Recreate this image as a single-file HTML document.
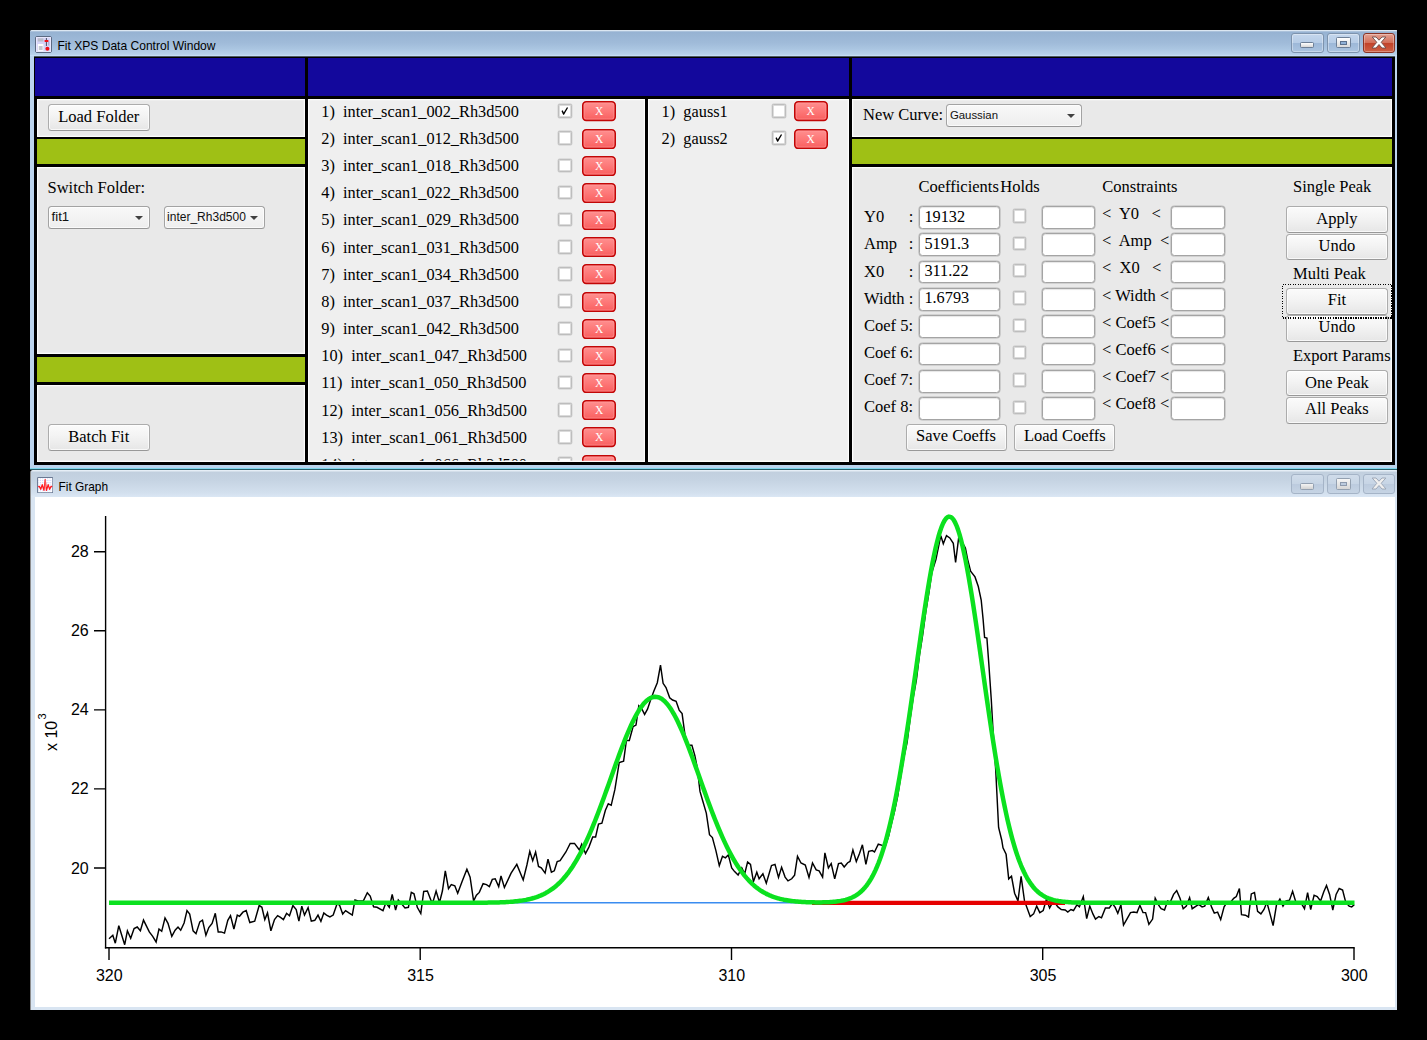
<!DOCTYPE html>
<html><head><meta charset="utf-8"><title>Fit XPS</title>
<style>
html,body{margin:0;padding:0;background:#000;}
body{width:1427px;height:1040px;position:relative;overflow:hidden;font-family:"Liberation Serif",serif;font-size:16.5px;color:#000;}
div,span{position:absolute;box-sizing:border-box;}
.win{left:30px;width:1367px;}
.tb{left:0;top:0;width:100%;}
.ttl{font-family:"Liberation Sans",sans-serif;font-size:12.05px;color:#000;white-space:nowrap;line-height:14px;}
.wb{top:3px;width:32.5px;height:19.6px;border-radius:3px;}
.blk{background:#000;}
.blue{background:#13089c;}
.grn{background:#9fc015;}
.g1{background:#e9e9e9;box-shadow:inset 0 0 0 1px #fdfdfd,inset 0 0 0 2px rgba(255,255,255,.22);}
.g2{background:#efefef;}
.g2::after{content:"";position:absolute;left:0;top:0;right:0;bottom:0;box-shadow:inset 0 0 0 1px #fdfdfd,inset 0 0 0 2px rgba(255,255,255,.22);pointer-events:none;}
.btn{height:26.5px;border:1px solid #acacac;border-bottom-color:#989898;border-radius:3.5px;background:linear-gradient(#fbfbfb,#f4f4f4 40%,#ececec 75%,#e6e6e6);text-align:center;line-height:22.4px;font-size:16.5px;white-space:nowrap;box-shadow:inset 0 0 0 1px rgba(255,255,255,.7);}
.dd{height:22.5px;border:1px solid #a3a3a3;border-bottom-color:#979797;border-radius:3.5px;background:linear-gradient(#f8f8f8,#f3f3f3 50%,#eeeeee);font-family:"Liberation Sans",sans-serif;font-size:12px;line-height:20.5px;padding-left:2.6px;white-space:nowrap;color:#111;box-shadow:inset 0 0 0 1px rgba(255,255,255,.7);}
.dd i{position:absolute;right:5.4px;top:8.7px;width:0;height:0;border-left:4.05px solid transparent;border-right:4.05px solid transparent;border-top:4.3px solid #404040;}
.row{left:0;width:100%;height:27px;}
.row .t{left:13.3px;top:3.8px;white-space:pre;line-height:18px;font-size:16.32px;}
.cb{width:13.6px;height:13.6px;border:1px solid #bdbdbd;border-radius:1.5px;background:#fff;top:5.2px;box-shadow:inset 0 0 0 0.7px #cfcfcf,0 0 0 0.4px rgba(170,170,170,.5);}
.cb svg{position:absolute;left:0;top:0;}
.xb{top:2.45px;width:34px;height:20.2px;color:#fff;font-size:11.5px;text-align:center;line-height:20.4px;text-indent:-0.4px;}
.xb svg{position:absolute;left:0;top:0;}
.xb b{position:absolute;left:0;top:0;width:100%;font-weight:normal;}
.lb{white-space:pre;line-height:22.5px;}
.inp{height:22.5px;border:1px solid #a4a4a4;border-radius:3.5px;background:#fff;line-height:21px;padding-left:3.2px;white-space:nowrap;box-shadow:0 0 0 0.6px rgba(140,140,140,.5),inset 0 1px 1px rgba(0,0,0,.10);}
.hd{white-space:nowrap;line-height:18px;}
.ax{font-family:"Liberation Sans",sans-serif;font-size:16px;fill:#000;}
</style></head><body>

<svg width="0" height="0" style="position:absolute"><defs><linearGradient id="xg" x1="0" y1="0" x2="0" y2="1"><stop offset="0" stop-color="#ff9090"/><stop offset="0.5" stop-color="#fd7878"/><stop offset="1" stop-color="#f95e5e"/></linearGradient></defs></svg>
<!-- ================= Window 1 ================= -->
<div class="win" style="top:30px;height:438px;background:#bcd4ee;border-radius:2px 1px 0 0;">
  <div class="tb" style="height:26px;border-radius:2px 1px 0 0;background:linear-gradient(#dbe6f1 0,#dbe6f1 0.8px,#96b2d2 1.8px,#a0bbd9 50%,#aac5e1 72%,#b8d1eb 94%,#c6def6 97%,#c6def6 100%);"></div>
  <!-- icon -->
  <svg style="position:absolute;left:5.3px;top:6px" width="17" height="17" viewBox="0 0 17 17">
    <rect x="0.5" y="0.5" width="16" height="16" rx="1.5" fill="#d6d4f8" stroke="#5b6a83"/>
    <rect x="1.5" y="1.5" width="14" height="14" fill="none" stroke="#e9e8fd" stroke-width="1"/>
    <rect x="2.8" y="2.3" width="5.6" height="3.2" fill="#b9bdc9"/>
    <rect x="2.8" y="8" width="5.6" height="6.8" fill="#fff"/>
    <rect x="3.8" y="10" width="3.8" height="4" fill="#c3c6cf"/>
    <rect x="10.9" y="2" width="1" height="8" fill="#4c5160"/>
    <rect x="13.4" y="5.5" width="0.8" height="4" fill="#9a9cc0"/>
    <rect x="9.6" y="4" width="3.8" height="2" rx="0.6" fill="#f01018"/>
    <circle cx="12.4" cy="12.7" r="2" fill="#f01018"/>
  </svg>
  <span class="ttl" style="left:27.5px;top:9.3px;">Fit XPS Data Control Window</span>
  <!-- buttons -->
  <div class="wb" style="left:1261px;border:1px solid #7d93ad;background:linear-gradient(#c3d6ec,#b6cce6 48%,#9db8d8 52%,#abc4e0);box-shadow:inset 0 0 0 1px rgba(255,255,255,.35);">
    <span style="left:7.6px;top:8.2px;width:14.6px;height:6.2px;background:linear-gradient(#fff,#d6d6d6);border:1px solid #6d7f96;border-radius:1.5px;"></span></div>
  <div class="wb" style="left:1297px;border:1px solid #7d93ad;background:linear-gradient(#c3d6ec,#b6cce6 48%,#9db8d8 52%,#abc4e0);box-shadow:inset 0 0 0 1px rgba(255,255,255,.35);">
    <span style="left:7.8px;top:2.8px;width:15px;height:11.6px;background:linear-gradient(#fff,#dadada);border:1px solid #6d7f96;border-radius:1.5px;"></span>
    <span style="left:11.8px;top:6.6px;width:7.2px;height:4.2px;background:#8fb0d6;border:1px solid #5d718c;"></span></div>
  <div class="wb" style="left:1332.5px;border:1px solid #8a3426;background:linear-gradient(#e2a193,#d4705a 48%,#c2432a 52%,#cf6045);box-shadow:inset 0 0 0 1px rgba(255,255,255,.3);">
    <svg style="position:absolute;left:7px;top:2.2px" width="16" height="13" viewBox="0 0 16 13"><path d="M1.2 1 L5 1 L8 4.2 L11 1 L14.8 1 L10.2 6.3 L15 12 L11 12 L8 8.5 L5 12 L1 12 L5.8 6.3 Z" fill="#fff" stroke="#6b4c48" stroke-width="0.9" stroke-linejoin="round"/></svg></div>

  <!-- panel (coords relative to window: subtract 30) -->
  <div style="left:4px;top:26px;width:1361px;height:1px;background:#4f5a66;"></div><div class="blk" style="left:4px;top:27px;width:1361px;height:407.5px;"></div>
  <div class="blue" style="left:5px;top:28px;width:270px;height:38px;"></div>
  <div class="blue" style="left:278px;top:28px;width:541px;height:38px;"></div>
  <div class="blue" style="left:822px;top:28px;width:540px;height:38px;"></div>

  <!-- left panel -->
  <div class="g1" style="left:7px;top:69px;width:268px;height:38px;"></div>
  <div class="grn" style="left:7px;top:109.2px;width:268px;height:24.8px;"></div>
  <div class="g1" style="left:7px;top:137px;width:268px;height:187.3px;"></div>
  <div class="grn" style="left:7px;top:327.2px;width:268px;height:24.6px;"></div>
  <div class="g1" style="left:7px;top:355px;width:268px;height:76.8px;"></div>
  <!-- list panels -->
  <div class="g2" style="left:278px;top:69px;width:337px;height:362.8px;overflow:hidden;">
    <div style="left:0;top:0;width:100%;height:100%;">
<div class="row" style="top:0.00px"><span class="t">1)&nbsp; inter_scan1_002_Rh3d500</span><span class="cb" style="left:250px"><svg width="11.4" height="11.4" viewBox="0 0 12 12"><path d="M2.6 6.2 L3.9 5.6 L5 8 L8.4 2.4 L9.6 3 L5.3 10.2 L4.4 10.2 Z" fill="#000"/></svg></span><span class="xb" style="left:274.4px"><svg width="34" height="20.2" viewBox="0 0 34 20.2"><rect x="0.8" y="0.8" width="32.4" height="18.6" rx="3.4" fill="url(#xg)" stroke="#c10606" stroke-width="1.6"/><rect x="2.1" y="2.1" width="29.8" height="16" rx="2.3" fill="none" stroke="#ffa2a2" stroke-opacity=".55" stroke-width="1"/></svg><b>X</b></span></div>
<div class="row" style="top:27.17px"><span class="t">2)&nbsp; inter_scan1_012_Rh3d500</span><span class="cb" style="left:250px"></span><span class="xb" style="left:274.4px"><svg width="34" height="20.2" viewBox="0 0 34 20.2"><rect x="0.8" y="0.8" width="32.4" height="18.6" rx="3.4" fill="url(#xg)" stroke="#c10606" stroke-width="1.6"/><rect x="2.1" y="2.1" width="29.8" height="16" rx="2.3" fill="none" stroke="#ffa2a2" stroke-opacity=".55" stroke-width="1"/></svg><b>X</b></span></div>
<div class="row" style="top:54.34px"><span class="t">3)&nbsp; inter_scan1_018_Rh3d500</span><span class="cb" style="left:250px"></span><span class="xb" style="left:274.4px"><svg width="34" height="20.2" viewBox="0 0 34 20.2"><rect x="0.8" y="0.8" width="32.4" height="18.6" rx="3.4" fill="url(#xg)" stroke="#c10606" stroke-width="1.6"/><rect x="2.1" y="2.1" width="29.8" height="16" rx="2.3" fill="none" stroke="#ffa2a2" stroke-opacity=".55" stroke-width="1"/></svg><b>X</b></span></div>
<div class="row" style="top:81.51px"><span class="t">4)&nbsp; inter_scan1_022_Rh3d500</span><span class="cb" style="left:250px"></span><span class="xb" style="left:274.4px"><svg width="34" height="20.2" viewBox="0 0 34 20.2"><rect x="0.8" y="0.8" width="32.4" height="18.6" rx="3.4" fill="url(#xg)" stroke="#c10606" stroke-width="1.6"/><rect x="2.1" y="2.1" width="29.8" height="16" rx="2.3" fill="none" stroke="#ffa2a2" stroke-opacity=".55" stroke-width="1"/></svg><b>X</b></span></div>
<div class="row" style="top:108.68px"><span class="t">5)&nbsp; inter_scan1_029_Rh3d500</span><span class="cb" style="left:250px"></span><span class="xb" style="left:274.4px"><svg width="34" height="20.2" viewBox="0 0 34 20.2"><rect x="0.8" y="0.8" width="32.4" height="18.6" rx="3.4" fill="url(#xg)" stroke="#c10606" stroke-width="1.6"/><rect x="2.1" y="2.1" width="29.8" height="16" rx="2.3" fill="none" stroke="#ffa2a2" stroke-opacity=".55" stroke-width="1"/></svg><b>X</b></span></div>
<div class="row" style="top:135.85px"><span class="t">6)&nbsp; inter_scan1_031_Rh3d500</span><span class="cb" style="left:250px"></span><span class="xb" style="left:274.4px"><svg width="34" height="20.2" viewBox="0 0 34 20.2"><rect x="0.8" y="0.8" width="32.4" height="18.6" rx="3.4" fill="url(#xg)" stroke="#c10606" stroke-width="1.6"/><rect x="2.1" y="2.1" width="29.8" height="16" rx="2.3" fill="none" stroke="#ffa2a2" stroke-opacity=".55" stroke-width="1"/></svg><b>X</b></span></div>
<div class="row" style="top:163.02px"><span class="t">7)&nbsp; inter_scan1_034_Rh3d500</span><span class="cb" style="left:250px"></span><span class="xb" style="left:274.4px"><svg width="34" height="20.2" viewBox="0 0 34 20.2"><rect x="0.8" y="0.8" width="32.4" height="18.6" rx="3.4" fill="url(#xg)" stroke="#c10606" stroke-width="1.6"/><rect x="2.1" y="2.1" width="29.8" height="16" rx="2.3" fill="none" stroke="#ffa2a2" stroke-opacity=".55" stroke-width="1"/></svg><b>X</b></span></div>
<div class="row" style="top:190.19px"><span class="t">8)&nbsp; inter_scan1_037_Rh3d500</span><span class="cb" style="left:250px"></span><span class="xb" style="left:274.4px"><svg width="34" height="20.2" viewBox="0 0 34 20.2"><rect x="0.8" y="0.8" width="32.4" height="18.6" rx="3.4" fill="url(#xg)" stroke="#c10606" stroke-width="1.6"/><rect x="2.1" y="2.1" width="29.8" height="16" rx="2.3" fill="none" stroke="#ffa2a2" stroke-opacity=".55" stroke-width="1"/></svg><b>X</b></span></div>
<div class="row" style="top:217.36px"><span class="t">9)&nbsp; inter_scan1_042_Rh3d500</span><span class="cb" style="left:250px"></span><span class="xb" style="left:274.4px"><svg width="34" height="20.2" viewBox="0 0 34 20.2"><rect x="0.8" y="0.8" width="32.4" height="18.6" rx="3.4" fill="url(#xg)" stroke="#c10606" stroke-width="1.6"/><rect x="2.1" y="2.1" width="29.8" height="16" rx="2.3" fill="none" stroke="#ffa2a2" stroke-opacity=".55" stroke-width="1"/></svg><b>X</b></span></div>
<div class="row" style="top:244.53px"><span class="t">10)&nbsp; inter_scan1_047_Rh3d500</span><span class="cb" style="left:250px"></span><span class="xb" style="left:274.4px"><svg width="34" height="20.2" viewBox="0 0 34 20.2"><rect x="0.8" y="0.8" width="32.4" height="18.6" rx="3.4" fill="url(#xg)" stroke="#c10606" stroke-width="1.6"/><rect x="2.1" y="2.1" width="29.8" height="16" rx="2.3" fill="none" stroke="#ffa2a2" stroke-opacity=".55" stroke-width="1"/></svg><b>X</b></span></div>
<div class="row" style="top:271.70px"><span class="t">11)&nbsp; inter_scan1_050_Rh3d500</span><span class="cb" style="left:250px"></span><span class="xb" style="left:274.4px"><svg width="34" height="20.2" viewBox="0 0 34 20.2"><rect x="0.8" y="0.8" width="32.4" height="18.6" rx="3.4" fill="url(#xg)" stroke="#c10606" stroke-width="1.6"/><rect x="2.1" y="2.1" width="29.8" height="16" rx="2.3" fill="none" stroke="#ffa2a2" stroke-opacity=".55" stroke-width="1"/></svg><b>X</b></span></div>
<div class="row" style="top:298.87px"><span class="t">12)&nbsp; inter_scan1_056_Rh3d500</span><span class="cb" style="left:250px"></span><span class="xb" style="left:274.4px"><svg width="34" height="20.2" viewBox="0 0 34 20.2"><rect x="0.8" y="0.8" width="32.4" height="18.6" rx="3.4" fill="url(#xg)" stroke="#c10606" stroke-width="1.6"/><rect x="2.1" y="2.1" width="29.8" height="16" rx="2.3" fill="none" stroke="#ffa2a2" stroke-opacity=".55" stroke-width="1"/></svg><b>X</b></span></div>
<div class="row" style="top:326.04px"><span class="t">13)&nbsp; inter_scan1_061_Rh3d500</span><span class="cb" style="left:250px"></span><span class="xb" style="left:274.4px"><svg width="34" height="20.2" viewBox="0 0 34 20.2"><rect x="0.8" y="0.8" width="32.4" height="18.6" rx="3.4" fill="url(#xg)" stroke="#c10606" stroke-width="1.6"/><rect x="2.1" y="2.1" width="29.8" height="16" rx="2.3" fill="none" stroke="#ffa2a2" stroke-opacity=".55" stroke-width="1"/></svg><b>X</b></span></div>
<div class="row" style="top:353.21px"><span class="t">14)&nbsp; inter_scan1_066_Rh3d500</span><span class="cb" style="left:250px"></span><span class="xb" style="left:274.4px"><svg width="34" height="20.2" viewBox="0 0 34 20.2"><rect x="0.8" y="0.8" width="32.4" height="18.6" rx="3.4" fill="url(#xg)" stroke="#c10606" stroke-width="1.6"/><rect x="2.1" y="2.1" width="29.8" height="16" rx="2.3" fill="none" stroke="#ffa2a2" stroke-opacity=".55" stroke-width="1"/></svg><b>X</b></span></div>
    </div>
  </div>
  <div class="g2" style="left:618px;top:69px;width:201px;height:362.8px;overflow:hidden;">
<div class="row" style="top:0.00px"><span class="t" style="left:13.6px">1)&nbsp; gauss1</span><span class="cb" style="left:124.3px"></span><span class="xb" style="left:145.9px"><svg width="34" height="20.2" viewBox="0 0 34 20.2"><rect x="0.8" y="0.8" width="32.4" height="18.6" rx="3.4" fill="url(#xg)" stroke="#c10606" stroke-width="1.6"/><rect x="2.1" y="2.1" width="29.8" height="16" rx="2.3" fill="none" stroke="#ffa2a2" stroke-opacity=".55" stroke-width="1"/></svg><b>X</b></span></div>
<div class="row" style="top:27.17px"><span class="t" style="left:13.6px">2)&nbsp; gauss2</span><span class="cb" style="left:124.3px"><svg width="11.4" height="11.4" viewBox="0 0 12 12"><path d="M2.6 6.2 L3.9 5.6 L5 8 L8.4 2.4 L9.6 3 L5.3 10.2 L4.4 10.2 Z" fill="#000"/></svg></span><span class="xb" style="left:145.9px"><svg width="34" height="20.2" viewBox="0 0 34 20.2"><rect x="0.8" y="0.8" width="32.4" height="18.6" rx="3.4" fill="url(#xg)" stroke="#c10606" stroke-width="1.6"/><rect x="2.1" y="2.1" width="29.8" height="16" rx="2.3" fill="none" stroke="#ffa2a2" stroke-opacity=".55" stroke-width="1"/></svg><b>X</b></span></div>
  </div>
  <!-- right panel -->
  <div class="g1" style="left:822px;top:69px;width:540px;height:38px;"></div>
  <div class="grn" style="left:822px;top:109.3px;width:540px;height:24.7px;"></div>
  <div class="g1" style="left:822px;top:137px;width:540px;height:294.8px;"></div>
</div>
<!-- cyan/teal line between windows -->
<div style="left:30px;top:468px;width:1367px;height:1.2px;background:#7fd6ec;"></div>
<div style="left:30px;top:469.2px;width:1367px;height:1.3px;background:#27606b;"></div>

<!-- controls in absolute page coords -->
<div class="btn" style="left:48px;top:104.2px;width:101.5px;line-height:24.4px;">Load Folder</div>
<span class="hd" style="left:47.5px;top:179px;">Switch Folder:</span>
<div class="dd" style="left:48px;top:206.1px;width:101.5px;font-size:13.2px;">fit1<i></i></div>
<div class="dd" style="left:163.5px;top:206.1px;width:101.2px;">inter_Rh3d500<i></i></div>
<div class="btn" style="left:48px;top:424.2px;width:101.5px;line-height:24.4px;">Batch Fit</div>

<span class="hd" style="left:863px;top:106.3px;">New Curve:</span>
<div class="dd" style="left:946.3px;top:104.2px;width:135.3px;font-size:11.4px;">Gaussian<i></i></div>

<span class="hd" style="left:918.5px;top:178.2px;">Coefficients</span>
<span class="hd" style="left:1000.3px;top:178.2px;">Holds</span>
<span class="hd" style="left:1102.3px;top:178.2px;">Constraints</span>
<span class="hd" style="left:1293px;top:178.2px;">Single Peak</span>
<span class="lb" style="left:864px;top:206.30px">Y0</span><span class="lb" style="left:908.8px;top:206.30px">:</span><span class="inp" style="left:919px;top:206.10px;width:81px"></span><span class="lb" style="left:924.4px;top:206.40px;font-size:16.3px">19132</span><span class="cb" style="left:1012.5px;top:209.20px"></span><span class="inp" style="left:1041.5px;top:206.10px;width:53.6px"></span><span class="lb" style="left:1102px;top:203.00px">&lt;&nbsp; Y0 &nbsp; &lt;</span><span class="inp" style="left:1170.5px;top:206.10px;width:54.2px"></span>
<span class="lb" style="left:864px;top:233.40px">Amp</span><span class="lb" style="left:908.8px;top:233.40px">:</span><span class="inp" style="left:919px;top:233.43px;width:81px"></span><span class="lb" style="left:924.4px;top:233.35px;font-size:16.3px">5191.3</span><span class="cb" style="left:1012.5px;top:236.53px"></span><span class="inp" style="left:1041.5px;top:233.43px;width:53.6px"></span><span class="lb" style="left:1102px;top:230.17px">&lt;&nbsp; Amp &nbsp;&lt;</span><span class="inp" style="left:1170.5px;top:233.43px;width:54.2px"></span>
<span class="lb" style="left:864px;top:260.50px">X0</span><span class="lb" style="left:908.8px;top:260.50px">:</span><span class="inp" style="left:919px;top:260.76px;width:81px"></span><span class="lb" style="left:924.4px;top:260.30px;font-size:16.3px">311.22</span><span class="cb" style="left:1012.5px;top:263.86px"></span><span class="inp" style="left:1041.5px;top:260.76px;width:53.6px"></span><span class="lb" style="left:1102px;top:257.34px">&lt;&nbsp; X0 &nbsp; &lt;</span><span class="inp" style="left:1170.5px;top:260.76px;width:54.2px"></span>
<span class="lb" style="left:864px;top:287.60px">Width :</span><span class="inp" style="left:919px;top:288.09px;width:81px"></span><span class="lb" style="left:924.4px;top:287.25px;font-size:16.3px">1.6793</span><span class="cb" style="left:1012.5px;top:291.19px"></span><span class="inp" style="left:1041.5px;top:288.09px;width:53.6px"></span><span class="lb" style="left:1102px;top:284.51px">&lt; Width &lt;</span><span class="inp" style="left:1170.5px;top:288.09px;width:54.2px"></span>
<span class="lb" style="left:864px;top:314.70px">Coef 5:</span><span class="inp" style="left:919px;top:315.42px;width:81px"></span><span class="lb" style="left:924.4px;top:314.20px;font-size:16.3px"></span><span class="cb" style="left:1012.5px;top:318.52px"></span><span class="inp" style="left:1041.5px;top:315.42px;width:53.6px"></span><span class="lb" style="left:1102px;top:311.68px">&lt; Coef5 &lt;</span><span class="inp" style="left:1170.5px;top:315.42px;width:54.2px"></span>
<span class="lb" style="left:864px;top:341.80px">Coef 6:</span><span class="inp" style="left:919px;top:342.75px;width:81px"></span><span class="lb" style="left:924.4px;top:341.15px;font-size:16.3px"></span><span class="cb" style="left:1012.5px;top:345.85px"></span><span class="inp" style="left:1041.5px;top:342.75px;width:53.6px"></span><span class="lb" style="left:1102px;top:338.85px">&lt; Coef6 &lt;</span><span class="inp" style="left:1170.5px;top:342.75px;width:54.2px"></span>
<span class="lb" style="left:864px;top:368.90px">Coef 7:</span><span class="inp" style="left:919px;top:370.08px;width:81px"></span><span class="lb" style="left:924.4px;top:368.10px;font-size:16.3px"></span><span class="cb" style="left:1012.5px;top:373.18px"></span><span class="inp" style="left:1041.5px;top:370.08px;width:53.6px"></span><span class="lb" style="left:1102px;top:366.02px">&lt; Coef7 &lt;</span><span class="inp" style="left:1170.5px;top:370.08px;width:54.2px"></span>
<span class="lb" style="left:864px;top:396.00px">Coef 8:</span><span class="inp" style="left:919px;top:397.41px;width:81px"></span><span class="lb" style="left:924.4px;top:395.05px;font-size:16.3px"></span><span class="cb" style="left:1012.5px;top:400.51px"></span><span class="inp" style="left:1041.5px;top:397.41px;width:53.6px"></span><span class="lb" style="left:1102px;top:393.19px">&lt; Coef8 &lt;</span><span class="inp" style="left:1170.5px;top:397.41px;width:54.2px"></span>
<div class="btn" style="left:905.5px;top:424.4px;width:101px;">Save Coeffs</div>
<div class="btn" style="left:1014.3px;top:424.4px;width:101px;">Load Coeffs</div>

<div class="btn" style="left:1286.2px;top:206.3px;width:101.4px;line-height:24.2px;">Apply</div>
<div class="btn" style="left:1286.2px;top:233.8px;width:101.4px;">Undo</div>
<span class="hd" style="left:1293px;top:265.2px;">Multi Peak</span>
<div class="btn" style="left:1286.2px;top:315.4px;width:101.4px;">Undo</div>
<svg style="position:absolute;left:1281px;top:283px" width="113" height="37"><rect x="1.6" y="1.3" width="108.9" height="33.6" fill="none" stroke="#000" stroke-width="1.25" stroke-dasharray="1.25 1.25" shape-rendering="crispEdges"/></svg>
<div class="btn" style="left:1286.2px;top:288.2px;width:101.4px;">Fit</div>
<span class="hd" style="left:1293px;top:346.8px;">Export Params</span>
<div class="btn" style="left:1286.2px;top:369.5px;width:101.4px;line-height:23.4px;">One Peak</div>
<div class="btn" style="left:1286.2px;top:397.1px;width:101.4px;">All Peaks</div>

<!-- ================= Window 2 ================= -->
<div class="win" style="top:470.4px;height:539.6px;background:#d9e5f2;border-radius:3px 1px 0 0;border-left:1px solid #8c8c8c;">
  <div class="tb" style="height:27px;border-radius:3px 1px 0 0;background:linear-gradient(#e6eef6 0,#e6eef6 1px,#c1cfde 2px,#c6d4e3 40%,#d3e0ee 85%,#dbe7f4 100%);"></div>
  <svg style="position:absolute;left:5.6px;top:6.2px" width="16.4" height="16.4" viewBox="0 0 17 17">
    <rect x="0.6" y="0.6" width="15.8" height="15.8" rx="0.8" fill="#fff" stroke="#6a7993" stroke-width="1.1"/>
    <g stroke="#c9cbfa" stroke-width="0.7" stroke-dasharray="1 1"><path d="M3.5 1.2V15.8M6 1.2V15.8M8.5 1.2V15.8M11 1.2V15.8M13.5 1.2V15.8M1.2 3.5H15.8M1.2 6H15.8M1.2 8.5H15.8M1.2 11H15.8M1.2 13.5H15.8"/></g>
    <path d="M1.2 10 L2.4 9.7 L3.9 12.8 L5.4 8 L7.2 13.9 L8.5 2.6 L9.8 13.9 L11.6 8 L13.1 12.8 L14.6 9.7 L15.8 10" fill="none" stroke="#ff1a20" stroke-width="1.3" stroke-linejoin="round"/>
    <path d="M8.5 3 V11" fill="none" stroke="#ff8a8e" stroke-width="0.8"/>
  </svg>
  <span class="ttl" style="left:27.5px;top:9.8px;font-size:11.9px;">Fit Graph</span>
  <div class="wb" style="left:1260px;top:3.6px;border:1px solid #a5b4c7;background:linear-gradient(#d0dcea,#c7d5e5 48%,#bccbde 52%,#c6d4e4);">
    <span style="left:7.6px;top:8.4px;width:14.6px;height:6.2px;background:linear-gradient(#f4f4f4,#d2d2d2);border:1px solid #93a0b0;border-radius:1.5px;"></span></div>
  <div class="wb" style="left:1296px;top:3.6px;border:1px solid #a5b4c7;background:linear-gradient(#d0dcea,#c7d5e5 48%,#bccbde 52%,#c6d4e4);">
    <span style="left:7.8px;top:2.8px;width:15px;height:11.8px;background:linear-gradient(#f6f6f6,#d6d6d6);border:1px solid #93a0b0;border-radius:1.5px;"></span>
    <span style="left:11.8px;top:6.6px;width:7.2px;height:4.4px;background:#bccbde;border:1px solid #8d9aad;"></span></div>
  <div class="wb" style="left:1331.5px;top:3.6px;border:1px solid #a5b4c7;background:linear-gradient(#d0dcea,#c7d5e5 48%,#bccbde 52%,#c6d4e4);">
    <svg style="position:absolute;left:7px;top:2.4px" width="16" height="13" viewBox="0 0 16 13"><path d="M1.2 1 L5 1 L8 4.2 L11 1 L14.8 1 L10.2 6.3 L15 12 L11 12 L8 8.5 L5 12 L1 12 L5.8 6.3 Z" fill="#efefef" stroke="#97a3b3" stroke-width="0.9" stroke-linejoin="round"/></svg></div>
  <div style="left:4px;top:26.5px;width:1360.3px;height:510px;background:#fff;"></div>
</div>

<svg style="position:absolute;left:0;top:0" width="1427" height="1040" viewBox="0 0 1427 1040">
  <g fill="none" stroke="#000" stroke-width="1.4" shape-rendering="auto">
    <path d="M105.6 516 V948.4"/>
    <path d="M104.9 947.8 H1354.7"/>
    <path d="M94 551.8H105.6M94 630.8H105.6M94 709.9H105.6M94 788.9H105.6M94 868H105.6"/>
    <path d="M109 947.8V960M420.2 947.8V960M731.5 947.8V960M1042.7 947.8V960M1354 947.8V960"/>
  </g>
  <g class="ax" text-anchor="end">
    <text x="88.7" y="557.3">28</text><text x="88.7" y="636.3">26</text><text x="88.7" y="715.4">24</text><text x="88.7" y="794.4">22</text><text x="88.7" y="873.5">20</text>
  </g>
  <g class="ax" text-anchor="middle">
    <text x="109.3" y="981">320</text><text x="420.5" y="981">315</text><text x="731.8" y="981">310</text><text x="1043" y="981">305</text><text x="1354.3" y="981">300</text>
  </g>
  <g class="ax" transform="translate(57.3,751) rotate(-90)"><text x="0" y="0">x 10</text><text x="31.5" y="-11.5" style="font-size:11px">3</text></g>
  <path d="M109.0 938.7 L112.8 935.3 L115.3 943.2 L118.8 925.7 L124.7 944.7 L127.4 930.8 L130.7 938.2 L134.1 928.6 L137.2 927.0 L140.4 930.8 L143.5 920.1 L149.3 931.9 L152.7 936.4 L156.1 942.0 L159.0 929.0 L161.7 931.3 L165.0 918.0 L168.0 923.4 L171.8 936.4 L175.1 930.2 L178.0 927.0 L180.7 930.2 L184.1 923.0 L187.0 910.6 L189.7 914.0 L193.1 930.8 L196.0 933.7 L199.8 921.9 L202.5 920.1 L205.9 935.3 L208.8 927.5 L212.1 923.4 L215.3 913.3 L218.2 931.9 L221.1 931.9 L224.5 933.1 L227.8 920.3 L230.5 915.6 L233.9 929.0 L237.3 915.1 L239.5 916.3 L242.9 912.2 L246.2 910.6 L249.8 922.5 L254.7 921.2 L259.2 905.5 L261.9 907.3 L264.8 919.6 L267.5 912.9 L270.9 930.8 L274.5 919.6 L277.6 915.6 L280.5 917.4 L283.4 919.6 L286.6 913.3 L289.5 915.8 L292.9 905.5 L296.2 909.5 L298.9 921.2 L301.8 906.2 L304.5 915.1 L308.1 907.7 L311.3 921.2 L314.8 920.3 L318.0 915.1 L320.9 921.4 L323.8 912.9 L326.5 915.1 L329.9 916.9 L333.2 915.1 L337.0 903.9 L339.5 905.0 L342.7 914.0 L345.6 910.6 L348.9 912.9 L352.3 915.1 L355.0 899.9 L357.9 901.0 L363.5 900.6 L367.3 892.7 L370.2 896.1 L373.6 906.8 L377.0 907.3 L383.0 910.6 L385.9 902.8 L389.3 907.3 L392.2 894.5 L395.6 910.0 L398.3 900.1 L401.6 903.9 L405.0 908.0 L408.4 907.3 L411.3 892.3 L414.0 893.8 L417.3 907.3 L420.8 913.5 L423.7 891.5 L427.4 891.0 L431.2 901.1 L433.2 901.1 L436.1 891.0 L439.5 902.5 L442.4 891.0 L445.3 870.8 L448.5 888.7 L451.3 884.6 L454.8 885.8 L457.7 893.3 L462.0 881.7 L466.9 869.3 L470.1 877.1 L473.6 901.1 L476.4 895.3 L479.3 892.4 L483.1 883.7 L486.5 884.6 L489.4 886.6 L492.3 879.4 L495.2 878.8 L498.7 886.6 L501.0 876.0 L504.4 887.5 L511.1 873.1 L516.8 864.4 L523.2 880.0 L526.9 865.0 L529.8 851.4 L532.7 860.7 L535.6 852.0 L538.5 866.4 L541.3 867.9 L545.1 873.1 L548.0 859.2 L551.4 872.2 L554.3 870.8 L557.2 861.5 L560.1 860.7 L565.9 852.0 L570.2 843.4 L574.5 843.4 L579.4 850.0 L581.7 844.2 L585.5 853.5 L588.9 847.1 L592.7 837.0 L595.6 837.0 L598.5 824.0 L601.9 823.2 L605.4 810.2 L608.3 803.8 L611.2 805.3 L614.9 789.4 L619.2 762.6 L623.6 761.2 L626.4 740.4 L629.3 740.4 L633.1 726.5 L636.0 725.1 L638.8 705.8 L641.7 708.7 L644.6 714.4 L647.5 709.2 L650.4 700.6 L653.8 691.3 L657.3 682.7 L660.5 665.1 L663.1 683.3 L666.0 687.6 L669.7 697.7 L672.6 700.0 L676.1 701.2 L679.2 710.1 L682.1 713.6 L685.0 735.2 L688.5 745.3 L691.9 745.3 L694.8 755.4 L697.1 766.9 L700.0 791.4 L702.9 801.5 L706.3 813.1 L709.5 834.7 L712.4 837.6 L715.9 850.6 L719.3 865.6 L722.5 856.3 L725.4 857.8 L728.3 854.9 L731.7 867.9 L734.6 871.6 L738.1 875.1 L741.8 867.9 L744.7 873.7 L747.6 862.1 L750.5 864.4 L753.4 881.7 L756.8 872.2 L759.1 878.8 L762.9 873.7 L766.3 883.2 L771.5 865.6 L775.0 864.4 L778.5 877.4 L781.6 867.3 L785.1 877.1 L788.0 880.9 L791.7 878.8 L794.6 875.1 L797.5 856.3 L801.0 863.0 L805.3 865.0 L809.0 877.4 L812.5 863.0 L816.2 869.9 L819.1 870.8 L822.6 877.1 L824.9 852.9 L828.4 867.9 L831.2 863.6 L834.7 878.8 L838.5 863.6 L841.3 863.0 L844.2 867.0 L847.7 862.7 L850.0 861.5 L852.9 850.0 L856.3 861.5 L859.5 853.5 L862.4 844.8 L865.9 864.4 L868.7 851.4 L872.5 850.6 L874.5 852.0 L878.3 844.2 L882.3 845.4 L885.4 845.7 L888.5 836.6 L891.6 823.2 L894.7 810.7 L897.8 795.5 L900.9 775.3 L904.0 756.8 L907.1 742.3 L910.2 718.4 L913.3 697.0 L916.4 679.9 L919.5 654.9 L922.6 635.5 L925.7 612.4 L928.8 593.5 L931.9 572.2 L935.9 559.6 L940.8 535.6 L943.3 543.8 L946.5 535.6 L949.8 537.9 L953.3 543.3 L955.6 562.5 L958.7 537.5 L962.0 542.0 L965.4 548.0 L967.7 559.6 L970.6 571.2 L975.0 576.9 L978.3 586.5 L981.2 600.0 L983.1 619.2 L984.6 637.5 L986.9 638.0 L988.8 663.5 L991.3 700.0 L992.8 726.5 L995.7 769.8 L998.6 827.5 L1001.7 840.0 L1003.0 847.8 L1006.1 854.3 L1008.7 878.9 L1011.5 876.3 L1014.6 893.2 L1018.0 900.9 L1021.1 876.3 L1024.5 900.9 L1030.2 916.5 L1033.6 913.9 L1036.7 906.1 L1039.8 912.6 L1043.2 910.5 L1046.5 899.1 L1049.6 907.9 L1053.5 900.9 L1057.9 906.9 L1061.3 909.5 L1065.2 910.0 L1067.8 912.1 L1070.9 909.5 L1073.5 910.5 L1076.9 904.8 L1079.4 906.9 L1083.3 896.5 L1086.7 918.6 L1089.8 906.1 L1092.9 913.9 L1095.5 919.1 L1098.9 916.5 L1101.5 917.8 L1105.4 907.9 L1109.3 907.9 L1112.4 903.5 L1115.2 907.4 L1117.8 913.4 L1120.9 904.8 L1123.5 925.0 L1126.9 919.1 L1130.5 912.6 L1133.9 912.1 L1137.0 912.6 L1139.9 905.3 L1143.0 912.6 L1145.6 912.6 L1148.9 924.3 L1152.6 919.1 L1155.2 898.3 L1158.5 904.8 L1161.1 908.7 L1164.5 910.0 L1167.6 900.9 L1170.2 902.2 L1173.6 894.4 L1176.7 890.6 L1180.0 898.3 L1183.2 908.7 L1186.3 906.1 L1189.6 897.6 L1192.2 908.7 L1196.1 906.1 L1198.7 904.3 L1202.1 906.9 L1204.7 906.1 L1208.3 897.6 L1211.7 907.4 L1214.3 913.1 L1217.6 912.1 L1220.7 919.6 L1224.1 906.9 L1227.2 902.2 L1230.6 902.2 L1233.7 898.3 L1236.3 896.5 L1239.4 888.5 L1241.5 914.7 L1245.4 915.2 L1248.5 917.0 L1251.3 893.9 L1254.5 892.6 L1257.6 911.3 L1260.9 913.9 L1264.0 909.5 L1266.9 902.2 L1270.0 913.9 L1273.1 925.6 L1276.5 904.8 L1279.9 899.1 L1283.0 906.1 L1286.1 900.9 L1289.5 900.2 L1292.6 891.3 L1295.9 902.2 L1299.0 902.2 L1301.9 904.3 L1304.5 908.7 L1307.6 892.6 L1310.7 909.5 L1314.1 895.2 L1317.2 896.5 L1320.6 900.9 L1323.7 891.9 L1326.5 885.4 L1329.6 894.4 L1332.8 910.0 L1336.1 894.4 L1339.2 888.5 L1342.6 890.0 L1345.7 902.2 L1349.1 906.1 L1351.7 906.9 L1354.3 904.8" fill="none" stroke="#000" stroke-width="1.45" stroke-linejoin="miter"/>
  <path d="M109 902.8H1354" stroke="#3a8cf0" stroke-width="1.6" fill="none"/>
  <path d="M812 902.8H1065" stroke="#e60000" stroke-width="4.2" fill="none"/>
  <path d="M109.0 902.80 L110.5 902.80 L112.0 902.80 L113.5 902.80 L115.0 902.80 L116.5 902.80 L118.0 902.80 L119.5 902.80 L121.0 902.80 L122.5 902.80 L124.0 902.80 L125.5 902.80 L127.0 902.80 L128.5 902.80 L130.0 902.80 L131.5 902.80 L133.0 902.80 L134.5 902.80 L136.0 902.80 L137.5 902.80 L139.0 902.80 L140.5 902.80 L142.0 902.80 L143.5 902.80 L145.0 902.80 L146.5 902.80 L148.0 902.80 L149.5 902.80 L151.0 902.80 L152.5 902.80 L154.0 902.80 L155.5 902.80 L157.0 902.80 L158.5 902.80 L160.0 902.80 L161.5 902.80 L163.0 902.80 L164.5 902.80 L166.0 902.80 L167.5 902.80 L169.0 902.80 L170.5 902.80 L172.0 902.80 L173.5 902.80 L175.0 902.80 L176.5 902.80 L178.0 902.80 L179.5 902.80 L181.0 902.80 L182.5 902.80 L184.0 902.80 L185.5 902.80 L187.0 902.80 L188.5 902.80 L190.0 902.80 L191.5 902.80 L193.0 902.80 L194.5 902.80 L196.0 902.80 L197.5 902.80 L199.0 902.80 L200.5 902.80 L202.0 902.80 L203.5 902.80 L205.0 902.80 L206.5 902.80 L208.0 902.80 L209.5 902.80 L211.0 902.80 L212.5 902.80 L214.0 902.80 L215.5 902.80 L217.0 902.80 L218.5 902.80 L220.0 902.80 L221.5 902.80 L223.0 902.80 L224.5 902.80 L226.0 902.80 L227.5 902.80 L229.0 902.80 L230.5 902.80 L232.0 902.80 L233.5 902.80 L235.0 902.80 L236.5 902.80 L238.0 902.80 L239.5 902.80 L241.0 902.80 L242.5 902.80 L244.0 902.80 L245.5 902.80 L247.0 902.80 L248.5 902.80 L250.0 902.80 L251.5 902.80 L253.0 902.80 L254.5 902.80 L256.0 902.80 L257.5 902.80 L259.0 902.80 L260.5 902.80 L262.0 902.80 L263.5 902.80 L265.0 902.80 L266.5 902.80 L268.0 902.80 L269.5 902.80 L271.0 902.80 L272.5 902.80 L274.0 902.80 L275.5 902.80 L277.0 902.80 L278.5 902.80 L280.0 902.80 L281.5 902.80 L283.0 902.80 L284.5 902.80 L286.0 902.80 L287.5 902.80 L289.0 902.80 L290.5 902.80 L292.0 902.80 L293.5 902.80 L295.0 902.80 L296.5 902.80 L298.0 902.80 L299.5 902.80 L301.0 902.80 L302.5 902.80 L304.0 902.80 L305.5 902.80 L307.0 902.80 L308.5 902.80 L310.0 902.80 L311.5 902.80 L313.0 902.80 L314.5 902.80 L316.0 902.80 L317.5 902.80 L319.0 902.80 L320.5 902.80 L322.0 902.80 L323.5 902.80 L325.0 902.80 L326.5 902.80 L328.0 902.80 L329.5 902.80 L331.0 902.80 L332.5 902.80 L334.0 902.80 L335.5 902.80 L337.0 902.80 L338.5 902.80 L340.0 902.80 L341.5 902.80 L343.0 902.80 L344.5 902.80 L346.0 902.80 L347.5 902.80 L349.0 902.80 L350.5 902.80 L352.0 902.80 L353.5 902.80 L355.0 902.80 L356.5 902.80 L358.0 902.80 L359.5 902.80 L361.0 902.80 L362.5 902.80 L364.0 902.80 L365.5 902.80 L367.0 902.80 L368.5 902.80 L370.0 902.80 L371.5 902.80 L373.0 902.80 L374.5 902.80 L376.0 902.80 L377.5 902.80 L379.0 902.80 L380.5 902.80 L382.0 902.80 L383.5 902.80 L385.0 902.80 L386.5 902.80 L388.0 902.80 L389.5 902.80 L391.0 902.80 L392.5 902.80 L394.0 902.80 L395.5 902.80 L397.0 902.80 L398.5 902.80 L400.0 902.80 L401.5 902.80 L403.0 902.80 L404.5 902.80 L406.0 902.80 L407.5 902.80 L409.0 902.80 L410.5 902.80 L412.0 902.80 L413.5 902.80 L415.0 902.80 L416.5 902.80 L418.0 902.80 L419.5 902.80 L421.0 902.80 L422.5 902.80 L424.0 902.80 L425.5 902.80 L427.0 902.80 L428.5 902.80 L430.0 902.80 L431.5 902.80 L433.0 902.80 L434.5 902.80 L436.0 902.80 L437.5 902.80 L439.0 902.80 L440.5 902.80 L442.0 902.80 L443.5 902.80 L445.0 902.80 L446.5 902.80 L448.0 902.80 L449.5 902.80 L451.0 902.79 L452.5 902.79 L454.0 902.79 L455.5 902.79 L457.0 902.79 L458.5 902.79 L460.0 902.79 L461.5 902.79 L463.0 902.78 L464.5 902.78 L466.0 902.78 L467.5 902.77 L469.0 902.77 L470.5 902.76 L472.0 902.76 L473.5 902.75 L475.0 902.75 L476.5 902.74 L478.0 902.73 L479.5 902.72 L481.0 902.71 L482.5 902.69 L484.0 902.68 L485.5 902.66 L487.0 902.64 L488.5 902.62 L490.0 902.60 L491.5 902.57 L493.0 902.54 L494.5 902.51 L496.0 902.47 L497.5 902.43 L499.0 902.38 L500.5 902.33 L502.0 902.27 L503.5 902.21 L505.0 902.13 L506.5 902.05 L508.0 901.97 L509.5 901.87 L511.0 901.76 L512.5 901.64 L514.0 901.50 L515.5 901.36 L517.0 901.20 L518.5 901.02 L520.0 900.83 L521.5 900.61 L523.0 900.38 L524.5 900.12 L526.0 899.85 L527.5 899.54 L529.0 899.21 L530.5 898.85 L532.0 898.46 L533.5 898.04 L535.0 897.57 L536.5 897.08 L538.0 896.54 L539.5 895.96 L541.0 895.33 L542.5 894.66 L544.0 893.93 L545.5 893.15 L547.0 892.31 L548.5 891.42 L550.0 890.46 L551.5 889.44 L553.0 888.35 L554.5 887.19 L556.0 885.95 L557.5 884.64 L559.0 883.24 L560.5 881.77 L562.0 880.20 L563.5 878.55 L565.0 876.81 L566.5 874.98 L568.0 873.05 L569.5 871.02 L571.0 868.89 L572.5 866.67 L574.0 864.34 L575.5 861.90 L577.0 859.36 L578.5 856.72 L580.0 853.97 L581.5 851.12 L583.0 848.16 L584.5 845.10 L586.0 841.94 L587.5 838.68 L589.0 835.32 L590.5 831.86 L592.0 828.32 L593.5 824.68 L595.0 820.97 L596.5 817.17 L598.0 813.30 L599.5 809.36 L601.0 805.36 L602.5 801.30 L604.0 797.20 L605.5 793.05 L607.0 788.87 L608.5 784.67 L610.0 780.45 L611.5 776.23 L613.0 772.01 L614.5 767.81 L616.0 763.62 L617.5 759.48 L619.0 755.37 L620.5 751.33 L622.0 747.35 L623.5 743.45 L625.0 739.63 L626.5 735.92 L628.0 732.31 L629.5 728.83 L631.0 725.48 L632.5 722.27 L634.0 719.21 L635.5 716.32 L637.0 713.59 L638.5 711.05 L640.0 708.69 L641.5 706.52 L643.0 704.56 L644.5 702.81 L646.0 701.27 L647.5 699.96 L649.0 698.87 L650.5 698.00 L652.0 697.37 L653.5 696.97 L655.0 696.80 L656.5 696.88 L658.0 697.18 L659.5 697.72 L661.0 698.49 L662.5 699.49 L664.0 700.72 L665.5 702.17 L667.0 703.84 L668.5 705.71 L670.0 707.80 L671.5 710.08 L673.0 712.55 L674.5 715.21 L676.0 718.03 L677.5 721.03 L679.0 724.18 L680.5 727.47 L682.0 730.91 L683.5 734.46 L685.0 738.13 L686.5 741.91 L688.0 745.78 L689.5 749.73 L691.0 753.75 L692.5 757.83 L694.0 761.96 L695.5 766.13 L697.0 770.33 L698.5 774.54 L700.0 778.76 L701.5 782.98 L703.0 787.19 L704.5 791.38 L706.0 795.54 L707.5 799.66 L709.0 803.74 L710.5 807.76 L712.0 811.73 L713.5 815.63 L715.0 819.46 L716.5 823.21 L718.0 826.88 L719.5 830.46 L721.0 833.95 L722.5 837.35 L724.0 840.65 L725.5 843.85 L727.0 846.95 L728.5 849.95 L730.0 852.84 L731.5 855.63 L733.0 858.32 L734.5 860.90 L736.0 863.38 L737.5 865.75 L739.0 868.02 L740.5 870.18 L742.0 872.25 L743.5 874.22 L745.0 876.09 L746.5 877.87 L748.0 879.56 L749.5 881.15 L751.0 882.66 L752.5 884.09 L754.0 885.43 L755.5 886.70 L757.0 887.89 L758.5 889.01 L760.0 890.06 L761.5 891.04 L763.0 891.96 L764.5 892.82 L766.0 893.62 L767.5 894.37 L769.0 895.07 L770.5 895.71 L772.0 896.31 L773.5 896.87 L775.0 897.38 L776.5 897.85 L778.0 898.29 L779.5 898.70 L781.0 899.07 L782.5 899.41 L784.0 899.73 L785.5 900.01 L787.0 900.28 L788.5 900.52 L790.0 900.74 L791.5 900.94 L793.0 901.12 L794.5 901.29 L796.0 901.44 L797.5 901.57 L799.0 901.70 L800.5 901.81 L802.0 901.91 L803.5 901.99 L805.0 902.07 L806.5 902.14 L808.0 902.20 L809.5 902.25 L811.0 902.30 L812.5 902.33 L814.0 902.36 L815.5 902.38 L817.0 902.39 L818.5 902.40 L820.0 902.39 L821.5 902.38 L823.0 902.36 L824.5 902.33 L826.0 902.28 L827.5 902.23 L829.0 902.16 L830.5 902.07 L832.0 901.97 L833.5 901.85 L835.0 901.71 L836.5 901.54 L838.0 901.35 L839.5 901.13 L841.0 900.87 L842.5 900.58 L844.0 900.24 L845.5 899.86 L847.0 899.42 L848.5 898.93 L850.0 898.37 L851.5 897.74 L853.0 897.03 L854.5 896.23 L856.0 895.33 L857.5 894.33 L859.0 893.22 L860.5 891.98 L862.0 890.60 L863.5 889.08 L865.0 887.40 L866.5 885.54 L868.0 883.51 L869.5 881.27 L871.0 878.83 L872.5 876.17 L874.0 873.26 L875.5 870.11 L877.0 866.70 L878.5 863.01 L880.0 859.03 L881.5 854.75 L883.0 850.16 L884.5 845.26 L886.0 840.02 L887.5 834.44 L889.0 828.52 L890.5 822.26 L892.0 815.64 L893.5 808.67 L895.0 801.35 L896.5 793.69 L898.0 785.68 L899.5 777.35 L901.0 768.69 L902.5 759.73 L904.0 750.48 L905.5 740.97 L907.0 731.21 L908.5 721.23 L910.0 711.07 L911.5 700.75 L913.0 690.30 L914.5 679.78 L916.0 669.20 L917.5 658.63 L919.0 648.10 L920.5 637.65 L922.0 627.34 L923.5 617.21 L925.0 607.31 L926.5 597.69 L928.0 588.40 L929.5 579.49 L931.0 571.00 L932.5 562.99 L934.0 555.49 L935.5 548.55 L937.0 542.20 L938.5 536.49 L940.0 531.45 L941.5 527.11 L943.0 523.49 L944.5 520.61 L946.0 518.50 L947.5 517.17 L949.0 516.62 L950.5 516.85 L952.0 517.87 L953.5 519.68 L955.0 522.25 L956.5 525.57 L958.0 529.63 L959.5 534.39 L961.0 539.84 L962.5 545.94 L964.0 552.64 L965.5 559.92 L967.0 567.74 L968.5 576.04 L970.0 584.79 L971.5 593.93 L973.0 603.43 L974.5 613.22 L976.0 623.26 L977.5 633.51 L979.0 643.90 L980.5 654.41 L982.0 664.97 L983.5 675.55 L985.0 686.10 L986.5 696.58 L988.0 706.96 L989.5 717.19 L991.0 727.24 L992.5 737.09 L994.0 746.71 L995.5 756.07 L997.0 765.14 L998.5 773.92 L1000.0 782.39 L1001.5 790.53 L1003.0 798.33 L1004.5 805.79 L1006.0 812.89 L1007.5 819.65 L1009.0 826.06 L1010.5 832.12 L1012.0 837.83 L1013.5 843.20 L1015.0 848.24 L1016.5 852.95 L1018.0 857.36 L1019.5 861.45 L1021.0 865.26 L1022.5 868.78 L1024.0 872.03 L1025.5 875.04 L1027.0 877.79 L1028.5 880.33 L1030.0 882.64 L1031.5 884.75 L1033.0 886.68 L1034.5 888.43 L1036.0 890.02 L1037.5 891.45 L1039.0 892.74 L1040.5 893.91 L1042.0 894.95 L1043.5 895.89 L1045.0 896.73 L1046.5 897.47 L1048.0 898.14 L1049.5 898.73 L1051.0 899.25 L1052.5 899.71 L1054.0 900.12 L1055.5 900.48 L1057.0 900.79 L1058.5 901.07 L1060.0 901.31 L1061.5 901.52 L1063.0 901.70 L1064.5 901.86 L1066.0 902.00 L1067.5 902.11 L1069.0 902.22 L1070.5 902.31 L1072.0 902.38 L1073.5 902.45 L1075.0 902.50 L1076.5 902.55 L1078.0 902.59 L1079.5 902.62 L1081.0 902.65 L1082.5 902.68 L1084.0 902.70 L1085.5 902.71 L1087.0 902.73 L1088.5 902.74 L1090.0 902.75 L1091.5 902.76 L1093.0 902.77 L1094.5 902.77 L1096.0 902.78 L1097.5 902.78 L1099.0 902.79 L1100.5 902.79 L1102.0 902.79 L1103.5 902.79 L1105.0 902.79 L1106.5 902.79 L1108.0 902.80 L1109.5 902.80 L1111.0 902.80 L1112.5 902.80 L1114.0 902.80 L1115.5 902.80 L1117.0 902.80 L1118.5 902.80 L1120.0 902.80 L1121.5 902.80 L1123.0 902.80 L1124.5 902.80 L1126.0 902.80 L1127.5 902.80 L1129.0 902.80 L1130.5 902.80 L1132.0 902.80 L1133.5 902.80 L1135.0 902.80 L1136.5 902.80 L1138.0 902.80 L1139.5 902.80 L1141.0 902.80 L1142.5 902.80 L1144.0 902.80 L1145.5 902.80 L1147.0 902.80 L1148.5 902.80 L1150.0 902.80 L1151.5 902.80 L1153.0 902.80 L1154.5 902.80 L1156.0 902.80 L1157.5 902.80 L1159.0 902.80 L1160.5 902.80 L1162.0 902.80 L1163.5 902.80 L1165.0 902.80 L1166.5 902.80 L1168.0 902.80 L1169.5 902.80 L1171.0 902.80 L1172.5 902.80 L1174.0 902.80 L1175.5 902.80 L1177.0 902.80 L1178.5 902.80 L1180.0 902.80 L1181.5 902.80 L1183.0 902.80 L1184.5 902.80 L1186.0 902.80 L1187.5 902.80 L1189.0 902.80 L1190.5 902.80 L1192.0 902.80 L1193.5 902.80 L1195.0 902.80 L1196.5 902.80 L1198.0 902.80 L1199.5 902.80 L1201.0 902.80 L1202.5 902.80 L1204.0 902.80 L1205.5 902.80 L1207.0 902.80 L1208.5 902.80 L1210.0 902.80 L1211.5 902.80 L1213.0 902.80 L1214.5 902.80 L1216.0 902.80 L1217.5 902.80 L1219.0 902.80 L1220.5 902.80 L1222.0 902.80 L1223.5 902.80 L1225.0 902.80 L1226.5 902.80 L1228.0 902.80 L1229.5 902.80 L1231.0 902.80 L1232.5 902.80 L1234.0 902.80 L1235.5 902.80 L1237.0 902.80 L1238.5 902.80 L1240.0 902.80 L1241.5 902.80 L1243.0 902.80 L1244.5 902.80 L1246.0 902.80 L1247.5 902.80 L1249.0 902.80 L1250.5 902.80 L1252.0 902.80 L1253.5 902.80 L1255.0 902.80 L1256.5 902.80 L1258.0 902.80 L1259.5 902.80 L1261.0 902.80 L1262.5 902.80 L1264.0 902.80 L1265.5 902.80 L1267.0 902.80 L1268.5 902.80 L1270.0 902.80 L1271.5 902.80 L1273.0 902.80 L1274.5 902.80 L1276.0 902.80 L1277.5 902.80 L1279.0 902.80 L1280.5 902.80 L1282.0 902.80 L1283.5 902.80 L1285.0 902.80 L1286.5 902.80 L1288.0 902.80 L1289.5 902.80 L1291.0 902.80 L1292.5 902.80 L1294.0 902.80 L1295.5 902.80 L1297.0 902.80 L1298.5 902.80 L1300.0 902.80 L1301.5 902.80 L1303.0 902.80 L1304.5 902.80 L1306.0 902.80 L1307.5 902.80 L1309.0 902.80 L1310.5 902.80 L1312.0 902.80 L1313.5 902.80 L1315.0 902.80 L1316.5 902.80 L1318.0 902.80 L1319.5 902.80 L1321.0 902.80 L1322.5 902.80 L1324.0 902.80 L1325.5 902.80 L1327.0 902.80 L1328.5 902.80 L1330.0 902.80 L1331.5 902.80 L1333.0 902.80 L1334.5 902.80 L1336.0 902.80 L1337.5 902.80 L1339.0 902.80 L1340.5 902.80 L1342.0 902.80 L1343.5 902.80 L1345.0 902.80 L1346.5 902.80 L1348.0 902.80 L1349.5 902.80 L1351.0 902.80 L1352.5 902.80 L1354.0 902.80 L1354.5 902.80" fill="none" stroke="#0be11f" stroke-width="4.5" stroke-linejoin="round" stroke-linecap="butt"/>
</svg>
</body></html>
